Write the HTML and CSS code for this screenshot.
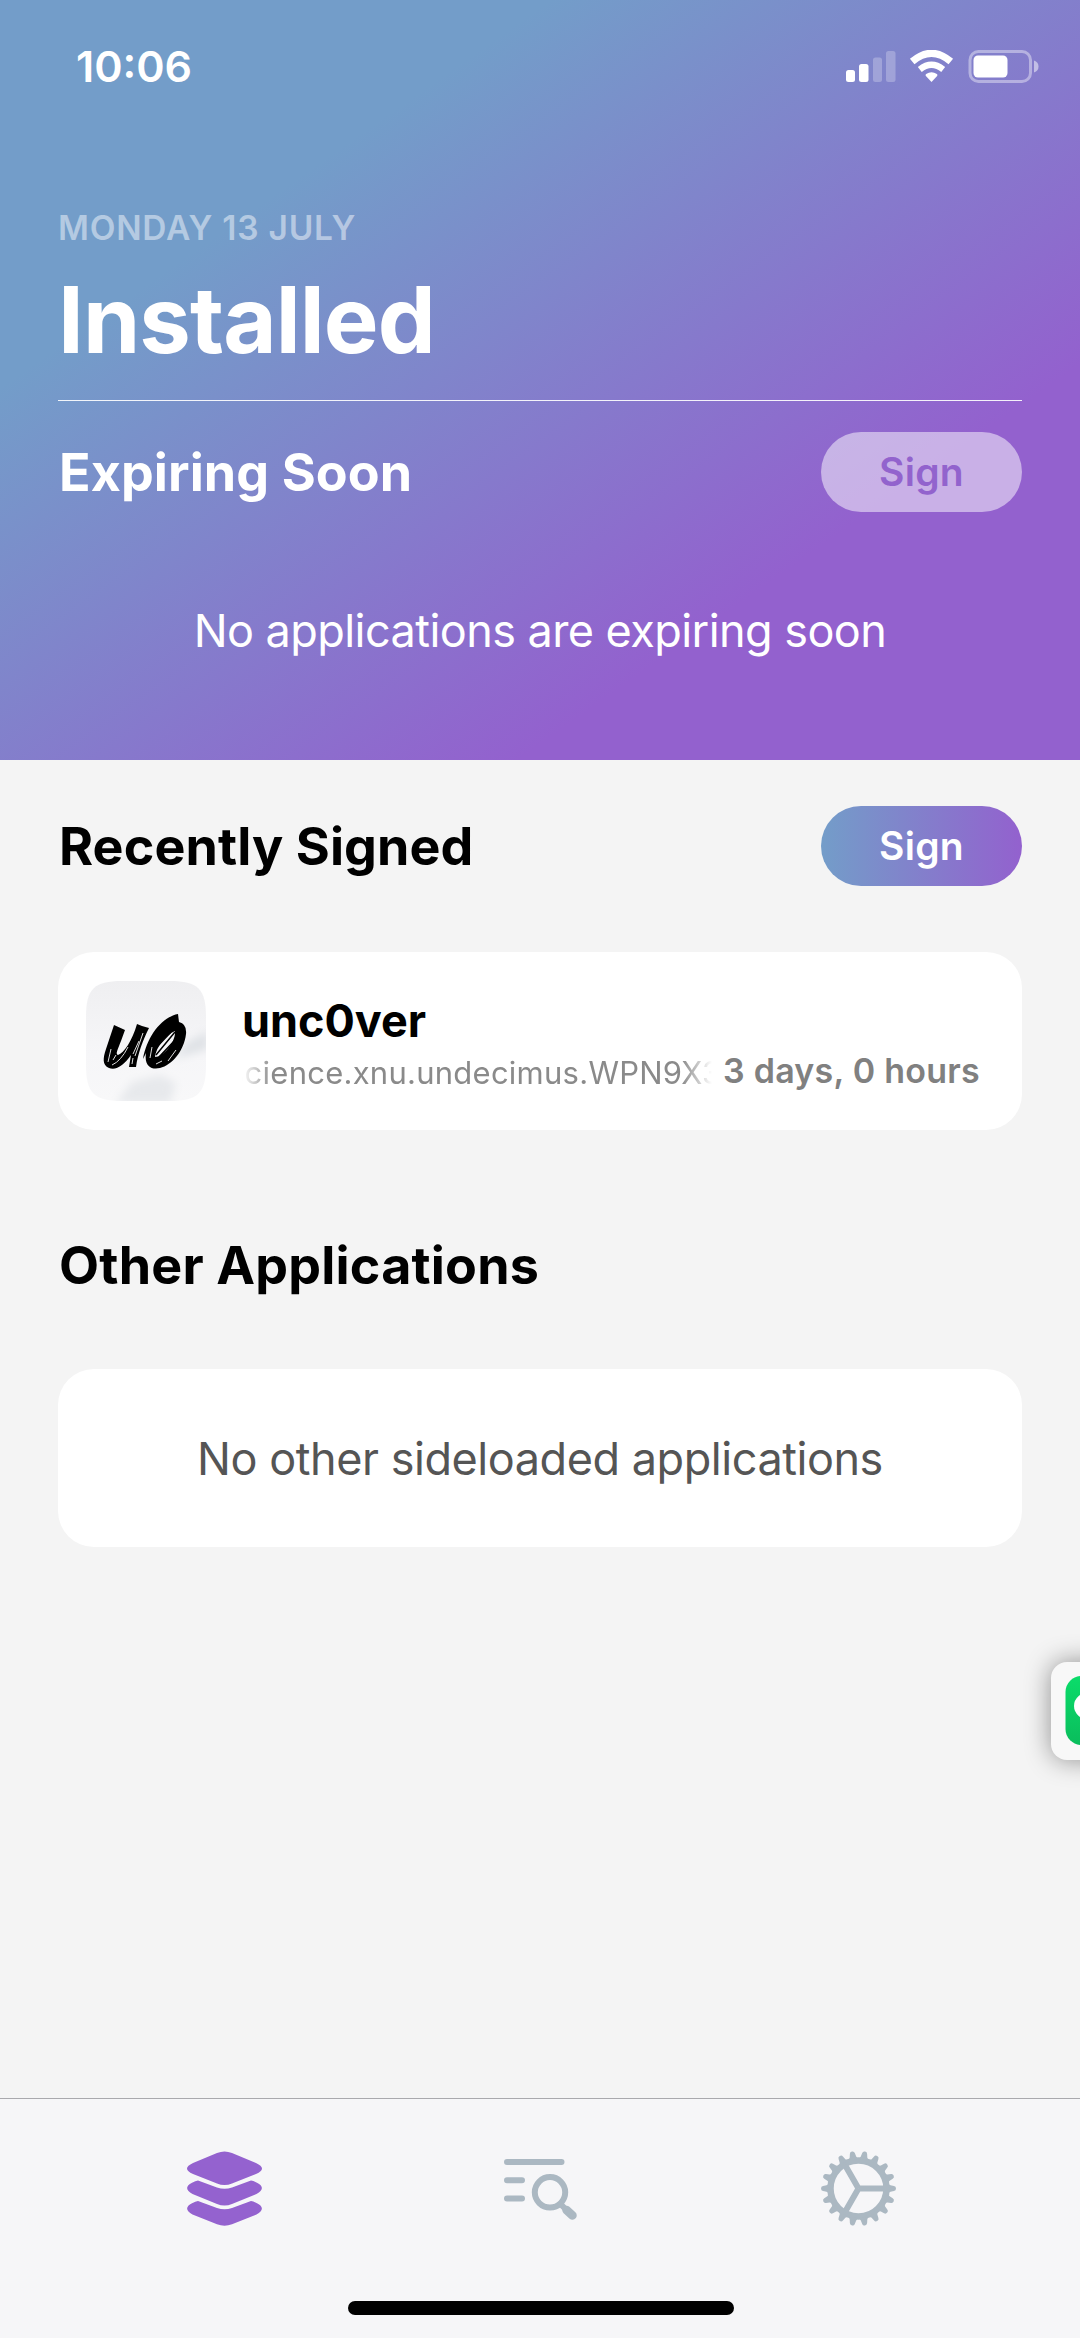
FILE: index.html
```html
<!DOCTYPE html>
<html lang="en">
<head>
<meta charset="utf-8">
<title>Installed</title>
<link rel="stylesheet" href="styles.css">
</head>
<body>
<div class="screen">
  <header class="hero">
    <div class="status-bar">
      <span class="clock">10:06</span>
      <svg class="status-icons" viewBox="0 0 193 34" width="193" height="34">
        <g fill="#fff">
          <rect x="0" y="20" width="9" height="12" rx="2.5"/>
          <rect x="13" y="14" width="9.500" height="18" rx="2.500"/>
          <g opacity=".25">
            <rect x="27" y="7.500" width="9" height="24.500" rx="2.500"/>
            <rect x="40" y="1" width="9.500" height="31" rx="2.500"/>
          </g>
          <path d="M85.500 32l-5.600-6q-.9-1.100.2-1.900 5.400-3.700 10.800 0 1.100.8.200 1.900z"/>
        </g>
        <g fill="none" stroke="#fff">
          <path d="M66.200 11.500q19.300-16.400 38.600 0" stroke-width="7"/>
          <path d="M73.800 19.500q11.700-9.400 23.400 0" stroke-width="6.200"/>
          <rect x="124" y="1.500" width="60.500" height="30" rx="8.500" stroke-width="3" opacity=".4"/>
        </g>
        <rect x="127.500" y="5.500" width="34" height="22" rx="4.500" fill="#fff"/>
        <path d="M188 10.500q4.500 1.500 4.500 6t-4.500 6z" fill="#fff" opacity=".5"/>
      </svg>
    </div>
    <div class="date">MONDAY 13 JULY</div>
    <h1 class="title">Installed</h1>
    <hr class="divider">
    <div class="section-head">
      <h2 class="heading heading-light">Expiring Soon</h2>
      <button class="sign sign-disabled">Sign</button>
    </div>
    <p class="hero-empty">No applications are expiring soon</p>
  </header>

  <main class="content">
    <div class="section-head">
      <h2 class="heading">Recently Signed</h2>
      <button class="sign sign-active">Sign</button>
    </div>
    <article class="card app">
      <svg class="app-icon" viewBox="0 0 120 120" width="120" height="120">
        <defs>
          <clipPath id="tile"><path d="M0 36C0 8 8 0 36 0H84C112 0 120 8 120 36V84C120 112 112 120 84 120H36C8 120 0 112 0 84Z"/></clipPath>
          <linearGradient id="snow" x1="0" y1="0" x2="0" y2="1"><stop offset="0" stop-color="#efeff1"/><stop offset=".6" stop-color="#f6f6f8"/><stop offset="1" stop-color="#f8f8f9"/></linearGradient>
          <filter id="soft"><feGaussianBlur stdDeviation="4"/></filter>
        </defs>
        <g clip-path="url(#tile)">
          <rect width="120" height="120" fill="url(#snow)"/>
          <g filter="url(#soft)">
            <path d="M122 50L100 62 88 78 122 68Z" fill="#dfe2e6"/>
            <path d="M30 122L46 101 74 94 90 102 84 122Z" fill="#e7e9ec"/>
          </g>
          <path d="M28 44L39 49 35 60C32 68 29 73 32 74C38 72 46 60 51 43L56 45 63 47C57 59 52 72 50 86L43 86L45 74C38 84 30 90 23 87C16 84 17 77 20 68Z"/>
          <path fill-rule="evenodd" d="M92 33L93 41Q101 43 100 53C98 70 86 84 74 87C65 89 58 85 60 72L57 78C61 55 76 36 92 33ZM89 50C80 54 70 66 69 76C77 76 90 61 89 50Z"/>
          <path d="M70 74L89 51M73 76L91 57M68 69L85 51" fill="none" stroke="#000" stroke-width="1.500"/>
          <path d="M22 81L25 68M26 84Q35 80 42 66M27 79L30 74M57 52L49 75M53 60L47 73M46 83L47 77M64 77L66 66M82 80L90 69M70 83L76 80" fill="none" stroke="#ddd" stroke-width="1"/>
        </g>
      </svg>
      <div class="app-info">
        <h3 class="app-name">unc0ver</h3>
        <div class="app-meta">
          <div class="bundle"><span>science.xnu.undecimus.WPN9X3</span></div>
          <span class="expiry">3 days, 0 hours</span>
        </div>
      </div>
    </article>
    <h2 class="heading other">Other Applications</h2>
    <div class="card empty"><span>No other sideloaded applications</span></div>
  </main>

  <aside class="float">
    <svg viewBox="0 0 29 98" width="29" height="98">
      <defs><linearGradient id="green" x1="0" y1="0" x2="0" y2="1"><stop offset="0" stop-color="#0bdc6a"/><stop offset="1" stop-color="#0abd5c"/></linearGradient></defs>
      <rect x="14.500" y="14" width="69" height="69" rx="16" fill="url(#green)"/>
      <ellipse cx="39" cy="44" rx="16" ry="14" fill="#fff"/>
    </svg>
  </aside>

  <nav class="tabs">
    <div class="tab-row">
      <a class="tab">
        <svg viewBox="0 0 75 75" width="75" height="75" fill="#9462cf">
          <path d="M30 2Q37.500-1 45 2L69 12Q81 17.500 69 23L45 32.500Q37.500 35.500 30 32.500L6 23Q-6 17.500 6 12Z"/>
          <path d="M11 29.500Q8.500 29.800 5 31.800Q-5 37 5.500 43L30 53Q37.500 56 45 53L69.500 43Q80 37 70 31.800Q66.500 29.800 64 29.500L45 36.500Q37.500 39 30 36.500Z"/>
          <path d="M11 50Q8.500 50.300 5 52.300Q-5 57.500 5.500 63.500L30 73.300Q37.500 76 45 73.300L69.500 63.500Q80 57.500 70 52.300Q66.500 50.300 64 50L45 57Q37.500 59.500 30 57Z"/>
        </svg>
      </a>
      <a class="tab">
        <svg viewBox="0 0 75 75" width="75" height="75" fill="none" stroke="#abb8c2" stroke-width="6" stroke-linecap="round">
          <path d="M3 11H57.500M3 29.300H18M3 47.500H18"/>
          <circle cx="46" cy="41.300" r="15.200"/>
          <path d="M56.500 53L62 58.500"/>
          <path d="M62.500 59L68.500 64.500" stroke-width="8.500"/>
        </svg>
      </a>
      <a class="tab">
        <svg viewBox="-37.500 -37.500 75 75" width="75" height="75" fill="none" stroke="#abb8c2">
          <circle r="28" stroke-width="6.500"/>
          <path d="M0 0H27M0 0L-13.500-23.400M0 0L-13.500 23.400" stroke-width="6"/>
          <g id="teeth" stroke="none" fill="#abb8c2"></g>
        </svg>
      </a>
    </div>
    <div class="home-indicator"></div>
  </nav>
</div>
<script src="gear.js"></script>
</body>
</html>
```
FILE: gear.js
```
// Eighteen rounded teeth spread evenly around the gear ring.
var teeth = document.getElementById("teeth");
for (var i = 0; i < 18; i++) {
  var tooth = document.createElementNS("http://www.w3.org/2000/svg", "path");
  tooth.setAttribute("d", "M29.500-4.700L32-3.300L35.500-2.500Q37.500-2.200 37.500 0T35.500 2.500L32 3.300L29.500 4.700Z");
  tooth.setAttribute("transform", "rotate(" + i * 20 + ")");
  teeth.appendChild(tooth);
}
```
FILE: styles.css
```css
* { box-sizing: border-box; }
body { margin: 0; font-family: Inter, "Liberation Sans", sans-serif; background: #f4f4f4; color: #000; }
h1, h2, h3, p { margin: 0; }
.screen { position: relative; display: flex; flex-direction: column; width: 1080px; height: 2338px; overflow: hidden; background: #f4f4f4; white-space: nowrap; }

.hero { height: 760px; flex: none; padding: 0 58px; color: #fff; background: linear-gradient(to bottom right, #739dc9 25.5%, #9361ce 74%); }
.status-bar { display: flex; justify-content: space-between; align-items: center; height: 132px; margin-right: -17px; padding-left: 18px; }
.clock { font-size: 43px; font-weight: 600; line-height: 52px; }
.status-icons { display: block; margin-top: 2px; }
.date { margin-top: 76px; font-size: 33.5px; line-height: 40px; font-weight: 580; letter-spacing: .75px; color: rgba(255,255,255,.47); }
.title { margin-top: 16px; font-size: 92px; line-height: 112px; font-weight: 700; letter-spacing: -.9px; }
.divider { height: 1px; margin: 24px 0 31px; border: 0; background: rgba(255,255,255,.9); }
.section-head { display: flex; justify-content: space-between; align-items: center; height: 80px; }
.heading { padding: 2px 0 0 1px; font-size: 52px; line-height: 64px; font-weight: 700; letter-spacing: .1px; }
.heading-light { color: #fff; }
.sign { width: 201px; height: 80px; padding: 0; border: 0; border-radius: 40px; font: 600 39px/48px Inter, "Liberation Sans", sans-serif; letter-spacing: .3px; }
.sign-disabled { color: #9263cd; background: rgba(255,255,255,.5); }
.sign-active { color: #fff; background: linear-gradient(to right, #739dc9, #9361ce); }
.hero-empty { margin-top: 91px; text-align: center; font-size: 45px; line-height: 56px; letter-spacing: -.56px; }

.content { flex: 1; padding: 46px 58px 0; }
.card { display: flex; width: 964px; height: 178px; border-radius: 36px; background: #fff; }
.app { align-items: center; margin-top: 66px; padding: 0 42px 0 28px; }
.app-icon { flex: none; }
.app-info { flex: 1; min-width: 0; margin-left: 36px; padding-top: 5px; }
.app-name { font-size: 45px; line-height: 54px; font-weight: 680; }
.app-meta { display: flex; align-items: center; justify-content: space-between; height: 46px; }
.bundle { width: 470px; overflow: hidden; padding-top: 5px; font-size: 31px; line-height: 42px; letter-spacing: .25px; color: #8a8a8a; -webkit-mask-image: linear-gradient(to right, transparent, #000 30px, #000 440px, transparent); mask-image: linear-gradient(to right, transparent, #000 30px, #000 440px, transparent); }
.bundle span { display: block; margin-left: -14px; }
.expiry { font-size: 34px; line-height: 42px; font-weight: 570; letter-spacing: .25px; color: #808080; }
.other { margin-top: 102px; letter-spacing: .2px; }
.empty { align-items: center; justify-content: center; margin-top: 71px; font-size: 45px; letter-spacing: -.45px; color: #555; }

.float { position: absolute; left: 1051px; top: 1662px; width: 98px; height: 98px; border-radius: 16px; background: #f8f8f8; box-shadow: 0 0 26px rgba(0,0,0,.42); }
.float svg { display: block; }

.tabs { display: flex; flex-direction: column; align-items: center; flex: none; height: 240px; border-top: 1px solid #a9a9ad; background: #f6f6f8; }
.tab-row { display: flex; justify-content: space-between; width: 709px; margin-top: 52px; margin-left: 2px; }
.tab { display: block; height: 75px; }
.tab svg { display: block; }
.home-indicator { width: 386px; height: 14px; margin: 75px 0 0 1px; border-radius: 7px; background: #000; }
```
